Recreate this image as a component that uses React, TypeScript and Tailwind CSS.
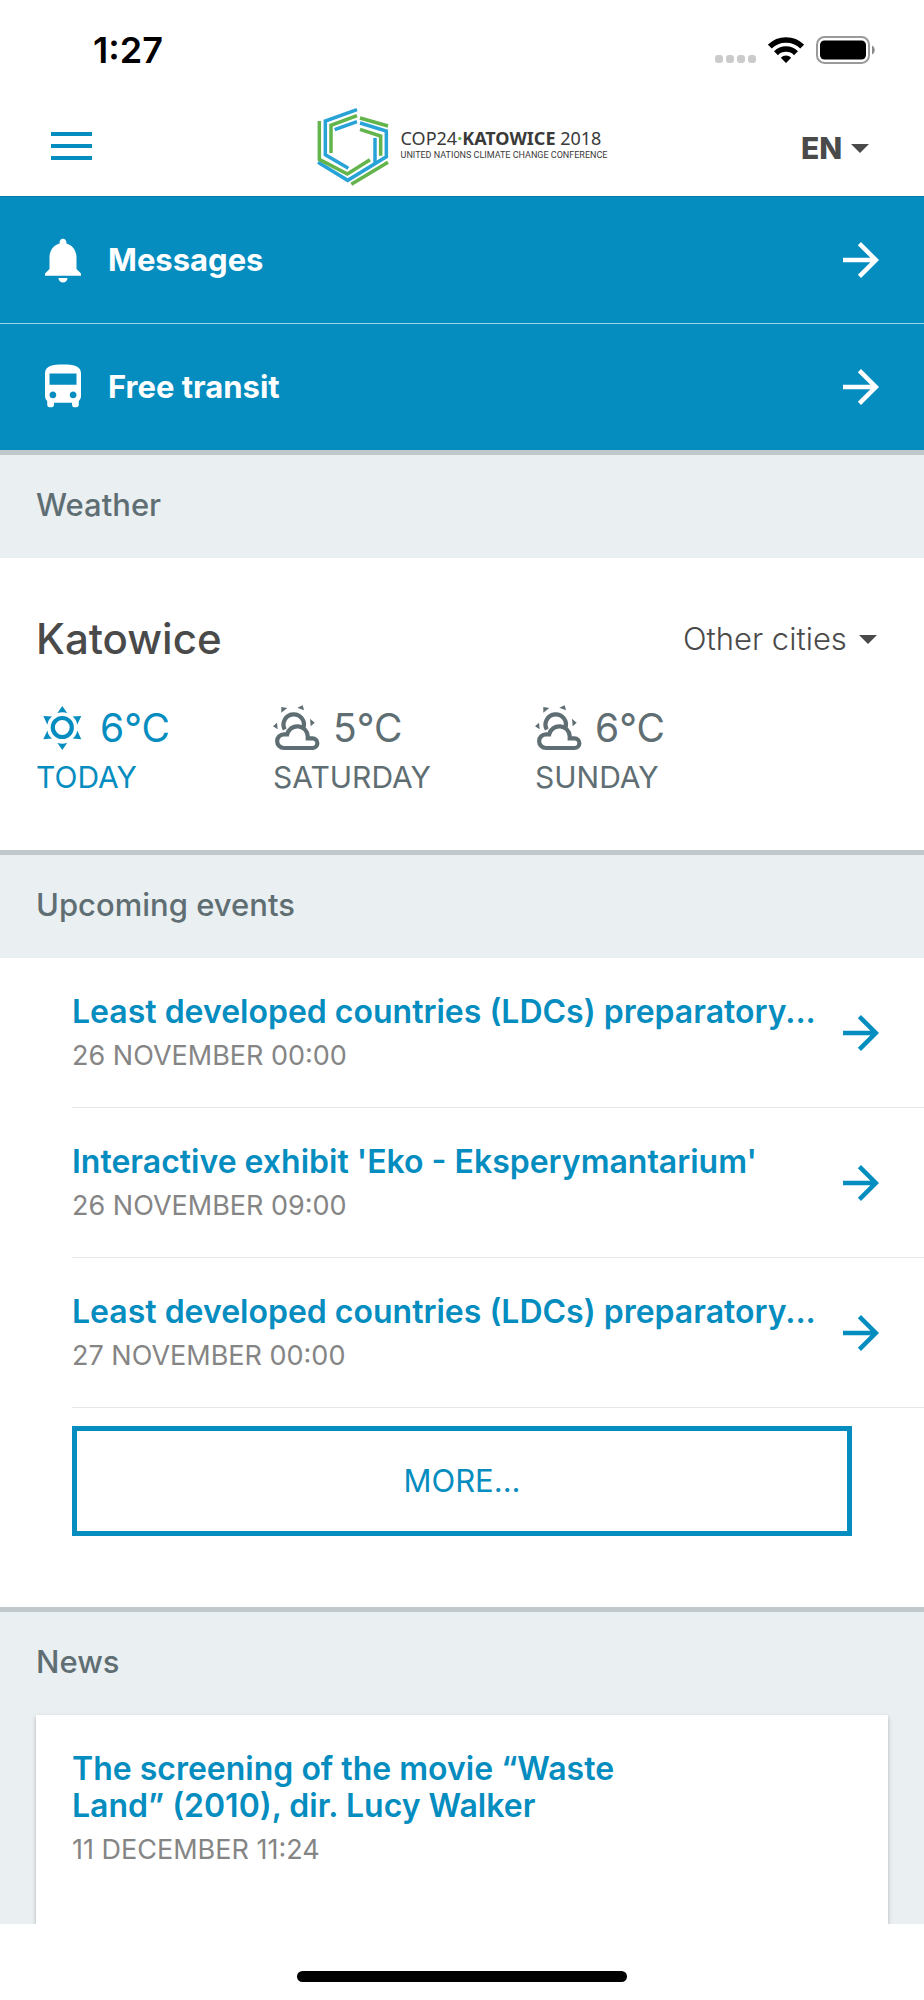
import React from "react";
import { MdArrowForward, MdDirectionsBus, MdNotifications } from "react-icons/md";

function Caret() {
  return (
    <svg viewBox="0 0 18 9" className="pointer-events-none absolute right-0 h-[9px] w-[18px] fill-[#4a4a4a]" aria-hidden="true">
      <path d="M0 0h18l-9 9z" />
    </svg>
  );
}

function StatusBar() {
  return (
    <div className="flex h-[100px] items-center justify-between pr-12 pl-[93px]">
      <span className="text-[36px] leading-10 font-semibold text-black">1:27</span>
      <div className="flex items-center">
        <div className="mt-[18px] mr-3 flex gap-[3px]">
          {[0, 1, 2, 3].map((i) => (
            <span key={i} className="size-2 rounded-[3px] bg-[#cbcbcb]" />
          ))}
        </div>
        <svg viewBox="0 0 36 26" className="mr-3 h-[26px] w-9" fill="none" stroke="#000" strokeWidth="5.500" aria-hidden="true">
          <path d="M1.8 9.600A23 23 0 0 1 34.200 9.600" />
          <path d="M8 16.200A14.300 14.300 0 0 1 28 16.200" />
          <path d="M18 26l-5.200-5.300a7.500 7.500 0 0 1 10.400 0z" fill="#000" stroke="none" />
        </svg>
        <svg viewBox="0 0 60 28" className="h-7 w-[60px]" aria-hidden="true">
          <rect x="1" y="1" width="52" height="26" rx="7.500" fill="none" stroke="#9a9a9a" strokeWidth="2" />
          <rect x="4" y="4.500" width="46" height="19" rx="4.500" fill="#000" />
          <path d="M56 9.500a5 5 0 0 1 0 9z" fill="#8a8a8a" />
        </svg>
      </div>
    </div>
  );
}

function Logo() {
  return (
    <a href="#home" className="flex items-center gap-3 text-[#3a3a39]">
      <svg viewBox="57 50 216 237" className="h-[79px] w-[72px]" fill="none" strokeWidth="10.500" aria-hidden="true">
        <g stroke="#27a3d8">
          <path d="M177 58L82 92V193L151 234" />
          <path d="M177 94L110 118" />
          <path d="M186 98L265 122V199L149 270L60 216" />
          <path d="M231 143V218" />
        </g>
        <g stroke="#62b44b">
          <path d="M64 92V207L148 251L216 208" />
          <path d="M177 76L99 105V188" />
          <path d="M186 83L270 107" />
          <path d="M186 117L248 137V196" />
          <path d="M160 282L270 216" />
        </g>
      </svg>
      <span className="flex flex-col gap-px pb-1">
        <span className="font-['Noto_Sans',sans-serif] text-[18px] leading-5 whitespace-nowrap">
          COP24<span className="font-bold text-[#62b44b]">·</span>
          <span className="font-bold">KATOWICE</span> 2018
        </span>
        <span className="font-['Roboto',sans-serif] text-[9px] leading-3 whitespace-nowrap">UNITED NATIONS CLIMATE CHANGE CONFERENCE</span>
      </span>
    </a>
  );
}

function Header() {
  return (
    <header className="grid h-24 grid-cols-[1fr_auto_1fr] items-center px-[51px] pb-1">
      <button type="button" aria-label="Menu" className="flex w-[41px] flex-col gap-2">
        <span className="h-1 bg-[#058dc0]" />
        <span className="h-1 bg-[#058dc0]" />
        <span className="h-1 bg-[#058dc0]" />
      </button>
      <Logo />
      <div className="relative mt-1 mr-1 flex items-center justify-self-end">
        <select aria-label="Language" className="appearance-none bg-transparent pr-[26px] text-[30px] leading-10 font-extrabold text-[#4a4a4a]">
          <option>EN</option>
        </select>
        <Caret />
      </div>
    </header>
  );
}

type Glyph = React.ComponentType<{ className?: string }>;

function QuickLink({ icon: Icon, label }: { icon: Glyph; label: string }) {
  return (
    <a href="#link" className="block text-white">
      <span className="flex h-[126px] items-center px-9">
        <Icon className="size-[54px]" />
        <span className="ml-[18px] flex-1 text-[31px] leading-9 font-bold">{label}</span>
        <MdArrowForward className="size-[54px]" />
      </span>
    </a>
  );
}

function SectionTitle({ children }: { children: React.ReactNode }) {
  return (
    <h2 className="flex h-[108px] items-center border-t-[5px] border-[#c1c8cb] bg-[#eaeff2] px-9 pb-1 text-[31px] leading-9 font-medium text-[#5f6e73]">
      {children}
    </h2>
  );
}

function SunIcon() {
  return (
    <svg viewBox="0 0 44 44" className="mx-1 size-11" fill="currentColor" aria-hidden="true">
      <circle cx="22.300" cy="21.500" r="9.500" fill="none" stroke="currentColor" strokeWidth="4.200" />
      <path d="M22.300 0l5 7.300q-5-2-10 0z" />
      <path d="M22.300 44l5-7.300q-5 2-10 0z" />
      <path d="M3.300 10l8.800.600q-4 3-4.700 8.200z" />
      <path d="M41.300 10l-8.800.600q4 3 4.700 8.200z" />
      <path d="M3.300 33.200l8.800-.600q-4-3-4.700-8.200z" />
      <path d="M41.300 33.200l-8.800-.600q4-3 4.700-8.200z" />
    </svg>
  );
}

function CloudSunIcon() {
  return (
    <svg viewBox="0 -1 48 46" className="h-[46px] w-12" fill="none" stroke="currentColor" strokeWidth="4.200" aria-hidden="true">
      <path d="M11 42a6.850 6.850 0 0 1 0-13.700h3.200A10.400 10.400 0 0 1 34.700 30v2.300h4.800a4.850 4.850 0 0 1 0 9.700z" />
      <path d="M11.800 23.500A10.200 10.200 0 1 1 30.300 22" />
      <g fill="currentColor" stroke="none">
        <path d="M8.300 1l6 1-6 4.700z" />
        <path d="M29.700-.7l1.300 5-6.700-2.600z" />
        <path d="M37 12.700l4.700 4-4 3.600z" />
        <path d="M0 20.300l4-3.600.7 6.600z" />
      </g>
    </svg>
  );
}

const forecast = [
  { day: "TODAY", temp: "6°C", icon: SunIcon, width: "w-[237px]", tone: "text-[#058dc0]" },
  { day: "SATURDAY", temp: "5°C", icon: CloudSunIcon, width: "w-[262px]", tone: "text-[#5f6e73]" },
  { day: "SUNDAY", temp: "6°C", icon: CloudSunIcon, width: "w-[262px]", tone: "text-[#5f6e73]" },
];

function Weather() {
  return (
    <section>
      <SectionTitle>Weather</SectionTitle>
      <div className="px-9 pt-[54px] pb-[55px]">
        <div className="flex items-center justify-between pr-[11px]">
          <h3 className="text-[42px] leading-[54px] font-medium text-[#4a4a4a]">Katowice</h3>
          <div className="relative flex items-center">
            <select aria-label="City" className="appearance-none bg-transparent pr-[30px] text-[31px] leading-9 font-light text-[#4a4a4a]">
              <option>Other cities</option>
            </select>
            <Caret />
          </div>
        </div>
        <ul className="mt-[38px] flex">
          {forecast.map(({ day, temp, icon: Icon, width, tone }) => (
            <li key={day} className={`${width} ${tone}`}>
              <div className="flex h-12 items-center gap-3">
                <Icon />
                <span className="text-[39px] leading-[48px]">{temp}</span>
              </div>
              <div className="mt-[7px] text-[30px] leading-9">{day}</div>
            </li>
          ))}
        </ul>
      </div>
    </section>
  );
}

const events = [
  { title: "Least developed countries (LDCs) preparatory...", date: "26 NOVEMBER 00:00" },
  { title: "Interactive exhibit 'Eko - Eksperymantarium'", date: "26 NOVEMBER 09:00" },
  { title: "Least developed countries (LDCs) preparatory...", date: "27 NOVEMBER 00:00" },
];

function Events() {
  return (
    <section>
      <SectionTitle>Upcoming events</SectionTitle>
      <ul className="pl-[72px]">
        {events.map(({ title, date }) => (
          <li key={date} className="border-b border-[#e4e7e8]">
            <a href="#event" className="flex h-[149px] items-center pr-9">
              <span className="min-w-0 flex-1">
                <span className="block text-[32px] leading-9 font-semibold text-[#058dc0]">{title}</span>
                <span className="mt-2.5 block text-[27px] leading-8 text-[#858585]">{date}</span>
              </span>
              <MdArrowForward className="size-[54px] shrink-0 text-[#058dc0]" />
            </a>
          </li>
        ))}
      </ul>
      <div className="px-[72px] pt-[18px] pb-[71px]">
        <button type="button" className="h-[110px] w-full border-[5px] border-[#058dc0] text-[31px] leading-9 text-[#058dc0]">
          MORE...
        </button>
      </div>
    </section>
  );
}

function News() {
  return (
    <section className="bg-[#eaeff2]">
      <SectionTitle>News</SectionTitle>
      <div className="px-9">
        <article className="h-[209px] bg-white px-9 pt-[35px] shadow-[0_2px_4px_rgba(0,0,0,0.25)]">
          <h3 className="max-w-[600px] text-[32px] leading-[37px] font-semibold text-[#058dc0]">
            <a href="#article">The screening of the movie “Waste Land” (2010), dir. Lucy Walker</a>
          </h3>
          <p className="mt-2.5 text-[27px] leading-8 text-[#858585]">11 DECEMBER 11:24</p>
        </article>
      </div>
    </section>
  );
}

export default function App() {
  return (
    <div className="min-h-screen bg-white font-['Inter',sans-serif]">
      <StatusBar />
      <Header />
      <nav className="divide-y divide-[#9fd6ea] border-t border-[#047ba8] bg-[#058dc0]">
        <QuickLink icon={MdNotifications} label="Messages" />
        <QuickLink icon={MdDirectionsBus} label="Free transit" />
      </nav>
      <main>
        <Weather />
        <Events />
        <News />
      </main>
      <footer className="relative flex h-[76px] items-end justify-center bg-white pb-[18px]">
        <span className="h-[11px] w-[330px] rounded-full bg-black" />
      </footer>
    </div>
  );
}
